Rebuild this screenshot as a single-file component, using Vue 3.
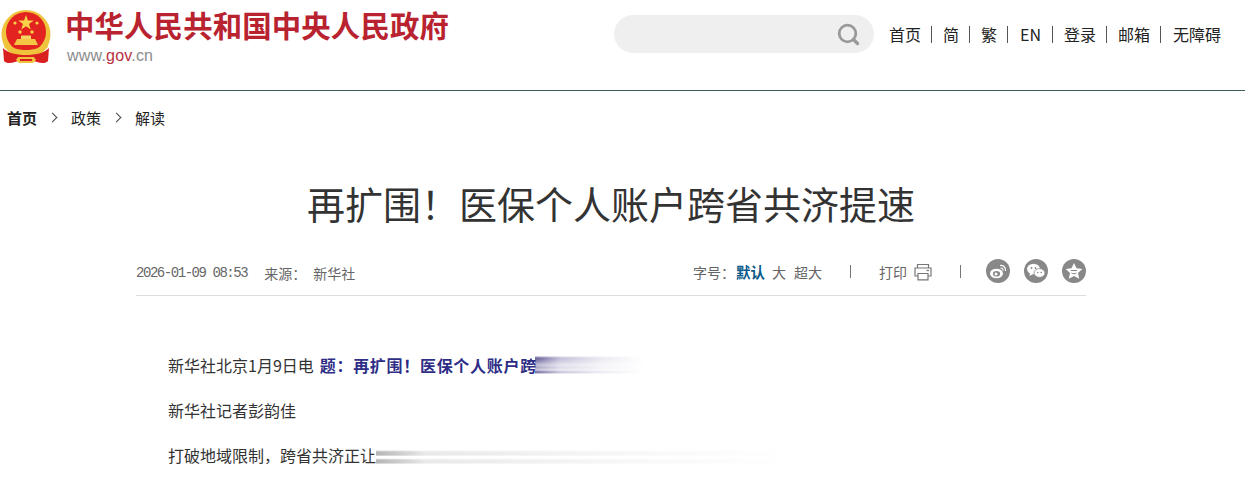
<script setup>
const nav = ['首页', '简', '繁', 'EN', '登录', '邮箱', '无障碍']
</script>

<template>
  <div class="page">
    <header class="top">
      <div class="brand">
        <svg class="emblem" viewBox="0 0 50 54" width="50" height="54" aria-hidden="true">
          <circle cx="25" cy="24.500" r="24.500" fill="#f0c33c"/>
          <circle cx="25" cy="22" r="20" fill="#e2231f"/>
          <polygon points="25,5 26.900,10.600 32.800,10.600 28,14 29.800,19.600 25,16.200 20.200,19.600 22,14 17.200,10.600 23.100,10.600" fill="#f8d34a"/>
          <circle cx="14" cy="13" r="1.600" fill="#f8d34a"/>
          <circle cx="36" cy="13" r="1.600" fill="#f8d34a"/>
          <circle cx="19" cy="22" r="1.700" fill="#f8d34a"/>
          <circle cx="31" cy="22" r="1.700" fill="#f8d34a"/>
          <path d="M16 29 H34 L37 35 H13 Z" fill="#f3c744"/>
          <rect x="20" y="25.500" width="10" height="3.500" fill="#f6d564"/>
          <path d="M5 31 C9 38 17 40 25 40 C33 40 41 38 45 31 L47 37 C41 43 33 45 25 45 C17 45 9 43 3 37 Z" fill="#f0c33c"/>
          <path d="M2 38 C7 43 15 45 25 45 C35 45 43 43 48 38 L47 51 C44 54 40 53 36 52 C29 50 21 50 14 52 C10 53 6 54 3 51 Z" fill="#d9201f"/>
          <path d="M17 47 H33 L35 50 L32 53 H18 L15 50 Z" fill="#f0c33c"/>
          <path d="M19 49 H31 V51 H19 Z" fill="#d9201f"/>
        </svg>
        <div class="brand-text">
          <div class="site-name">中华人民共和国中央人民政府</div>
          <div class="site-url">www.<span class="gov">gov</span>.cn</div>
        </div>
      </div>
      <div class="tools">
        <div class="search">
          <svg viewBox="0 0 24 24" width="24" height="24" fill="none" stroke="#999" aria-hidden="true">
            <circle cx="11.500" cy="11.500" r="8.300" stroke-width="2.800"/>
            <path d="M17.500 17.500 L21.500 21.500" stroke-width="3.200" stroke-linecap="round"/>
          </svg>
        </div>
        <nav class="links">
          <template v-for="(item, i) in nav" :key="item">
            <i v-if="i" class="bar"></i>
            <a>{{ item }}</a>
          </template>
        </nav>
      </div>
    </header>

    <div class="crumbs">
      <b>首页</b>
      <span class="chev"></span>
      <a>政策</a>
      <span class="chev"></span>
      <a>解读</a>
    </div>

    <main class="article">
      <h1>再扩围！医保个人账户跨省共济提速</h1>
      <div class="meta">
        <div class="meta-left">
          <span class="date">2026-01-09 08:53</span>
          <span class="src">来源：</span>
          <span class="agency">新华社</span>
        </div>
        <div class="meta-right">
          <span class="size-label">字号：</span>
          <b class="size-on">默认</b>
          <span class="size">大</span>
          <span class="size">超大</span>
          <i class="rule first"></i>
          <span>打印</span>
          <svg class="printer" viewBox="0 0 18 18" width="18" height="18" fill="none" stroke="#777" stroke-width="1.200" aria-hidden="true">
            <path d="M3.500 5 V1.500 H14.500 V5"/>
            <path d="M4 13 H1 V5 H17 V13 H14"/>
            <path d="M4 10.500 H14 V16.800 H4 Z"/>
            <path d="M12.500 7.500 H15"/>
          </svg>
          <i class="rule second"></i>
          <span class="round">
            <svg viewBox="0 0 24 24" width="24" height="24" aria-hidden="true">
              <ellipse cx="10.500" cy="14.500" rx="6.500" ry="4.800" fill="#fff"/>
              <ellipse cx="10.500" cy="14.800" rx="3.600" ry="2.800" fill="#888"/>
              <circle cx="10" cy="15" r="1.500" fill="#fff"/>
              <path d="M14 6.500 C17.500 6 20 8.500 19.500 12 M14.500 9 C16.200 8.800 17.300 10 17 11.500" fill="none" stroke="#fff" stroke-width="1.200"/>
            </svg>
          </span>
          <span class="round">
            <svg viewBox="0 0 24 24" width="24" height="24" aria-hidden="true">
              <ellipse cx="9.500" cy="10" rx="6.500" ry="5.200" fill="#fff"/>
              <path d="M6 14 L5.500 17 L9 15 Z" fill="#fff"/>
              <ellipse cx="15.500" cy="14" rx="5.500" ry="4.400" fill="#fff" stroke="#888" stroke-width=".8"/>
              <circle cx="7.500" cy="9" r=".9" fill="#888"/>
              <circle cx="11.500" cy="9" r=".9" fill="#888"/>
              <circle cx="13.800" cy="13.500" r=".8" fill="#888"/>
              <circle cx="17.200" cy="13.500" r=".8" fill="#888"/>
            </svg>
          </span>
          <span class="round">
            <svg viewBox="0 0 24 24" width="24" height="24" aria-hidden="true">
              <polygon points="12,4 14.500,9.200 20.300,10 16,14 17.200,19.700 12,17 6.800,19.700 8,14 3.700,10 9.500,9.200" fill="#fff"/>
              <path d="M9 11.500 H15 M9.500 14 C11 15 13 15 14.500 14" fill="none" stroke="#888" stroke-width="1"/>
            </svg>
          </span>
        </div>
      </div>

      <div class="body">
        <p>新华社北京1月9日电 <strong>题：再扩围！医保个人账户跨</strong><span class="fade fade-blue"></span></p>
        <p>新华社记者彭韵佳</p>
        <p>打破地域限制，跨省共济正让<span class="fade fade-grey"></span></p>
      </div>
    </main>
  </div>
</template>

<style>
html, body { margin: 0; background: #fff; }
</style>

<style scoped>
.page {
  width: 1245px;
  height: 478px;
  overflow: hidden;
  font-family: "Noto Sans CJK SC", "Liberation Sans", sans-serif;
  color: #333;
}
.top {
  box-sizing: border-box;
  border-bottom: 1px solid #3f5f5f;
  display: flex;
  justify-content: space-between;
  align-items: flex-start;
  padding: 0 24px 0 1px;
  height: 91px;
}
.brand { display: flex; align-items: flex-start; padding-top: 10px; }
.emblem { display: block; }
.brand-text { margin-top: -4px; margin-left: 14px; }
.site-name {
  font-size: 29.400px;
  letter-spacing: .15px;
  font-weight: 700;
  line-height: 36px;
  color: #b8232f;
  white-space: nowrap;
}
.site-url {
  margin-top: 4px;
  margin-left: 2px;
  font-family: "Liberation Sans", sans-serif;
  font-size: 16px;
  letter-spacing: .2px;
  line-height: 20px;
  color: #8c8c8c;
}
.gov { color: #b8323f; }
.tools { display: flex; align-items: center; padding-top: 15px; }
.search {
  width: 260px;
  height: 38px;
  border-radius: 19px;
  background: #efefef;
  display: flex;
  justify-content: flex-end;
  align-items: center;
  padding-right: 14px;
  box-sizing: border-box;
}
.links {
  display: flex;
  align-items: center;
  gap: 10.500px;
  margin-left: 15px;
  font-size: 16px;
  line-height: 38px;
  color: #222;
}
.links a:nth-of-type(4) { margin: 0 1px; }
.links a:last-child { margin-left: 1px; }
.bar { width: 1px; height: 17px; background: #555; margin-top: 1px; }
.crumbs {
  display: flex;
  align-items: center;
  height: 24px;
  margin-top: 14px;
  padding-left: 7px;
  font-size: 15px;
  color: #222;
}
.crumbs b { font-weight: 700; }
.chev {
  width: 7px;
  height: 7px;
  box-sizing: border-box;
  border-top: 1px solid #444;
  border-right: 1px solid #444;
  transform: rotate(45deg);
  margin: 0 15px 0 12px;
}
.article { width: 950px; margin-left: 136px; }
h1 {
  margin: 48px 0 0;
  font-size: 38px;
  line-height: 52px;
  font-weight: 400;
  color: #333;
  text-align: center;
}
.meta {
  margin-top: 22px;
  height: 45px;
  box-sizing: border-box;
  border-bottom: 1px solid #ddd;
  display: flex;
  justify-content: space-between;
  align-items: flex-start;
  font-size: 14px;
  color: #666;
}
.meta-left { display: flex; align-items: center; height: 38px; padding-top: 5px; box-sizing: border-box; }
.date {
  font-family: "Liberation Mono", monospace;
  letter-spacing: -1.450px;
  margin-right: 17px;
}
.src { width: 49px; }
.meta-right { display: flex; align-items: center; height: 38px; padding-top: 3px; box-sizing: border-box; }
.size-label { width: 43px; }
.size-on { color: #0b5a8a; font-weight: 700; font-size: 14.500px; }
.size { margin-left: 7px; }
.size + .size { margin-left: 8px; }
.rule { width: 1px; height: 13px; background: #777; }
.rule.first { margin: 0 28px; }
.rule.second { margin: 0 15px 0 28px; }
.printer { margin-left: 7px; }
.round {
  width: 24px;
  height: 24px;
  border-radius: 50%;
  background: #888;
  margin-left: 14px;
  margin-bottom: 2px;
  display: block;
}
.round svg { display: block; }
.round:nth-last-child(3) { margin-left: 10px; }
.body { margin-top: 54px; padding-left: 32px; font-size: 16px; color: #333; }
.body p { margin: 0 0 15px; line-height: 30px; height: 30px; white-space: nowrap; display: flex; align-items: center; }
.body strong { color: #2e2e86; font-weight: 700; margin-left: 6px; letter-spacing: .7px; }
.fade { display: block; height: 18px; filter: blur(.7px); }
.fade-blue {
  width: 112px;
  margin-left: -2px;
  background: linear-gradient(90deg, rgba(70,60,130,.85), rgba(130,125,175,.5) 22%, rgba(190,185,210,.3) 60%, rgba(255,255,255,0) 98%);
  -webkit-mask-image: linear-gradient(180deg, rgba(0,0,0,.15) 0, #000 12%, rgba(0,0,0,.75) 30%, rgba(0,0,0,.4) 50%, rgba(0,0,0,.55) 65%, rgba(0,0,0,.3) 78%, #000 90%, rgba(0,0,0,.1) 100%);
  mask-image: linear-gradient(180deg, rgba(0,0,0,.15) 0, #000 12%, rgba(0,0,0,.75) 30%, rgba(0,0,0,.4) 50%, rgba(0,0,0,.55) 65%, rgba(0,0,0,.3) 78%, #000 90%, rgba(0,0,0,.1) 100%);
}
.fade-grey {
  width: 415px;
  background: linear-gradient(90deg, rgba(130,130,130,.6), rgba(200,200,200,.4) 12%, rgba(230,230,230,.3) 60%, rgba(255,255,255,0));
  -webkit-mask-image: linear-gradient(180deg, transparent 22%, #000 33%, #000 50%, transparent 58%, transparent 68%, #000 78%, #000 95%, transparent 100%);
  mask-image: linear-gradient(180deg, transparent 22%, #000 33%, #000 50%, transparent 58%, transparent 68%, #000 78%, #000 95%, transparent 100%);
}
</style>
